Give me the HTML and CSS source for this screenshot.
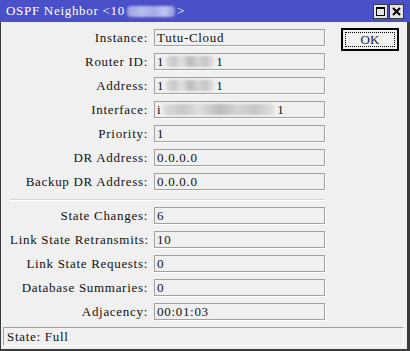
FILE: index.html
```html
<!DOCTYPE html>
<html lang="en">
<head>
    <meta charset="UTF-8">
    <title>OSPF Neighbor</title>
    <link rel="stylesheet" href="styles.css">
</head>
<body>

    <!-- Title bar -->
    <div class="titlebar">
        <div class="title">OSPF Neighbor &lt;10<span class="blur blur-title"></span>&gt;</div>
        <div class="win-buttons">
            <div class="win-btn">
                <svg width="9" height="9" viewBox="0 0 9 9"><rect x="0.5" y="0.5" width="8" height="8" fill="none" stroke="#000"/><rect x="0" y="0" width="9" height="2" fill="#000"/></svg>
            </div>
            <div class="win-btn">
                <svg width="9" height="9" viewBox="0 0 9 9"><path d="M1 1 L8 8 M8 1 L1 8" stroke="#000" stroke-width="2"/></svg>
            </div>
        </div>
    </div>

    <div class="frame">
        <div class="main">
            <div class="form">
                <div class="rows">
                    <div class="row"><label>Instance:</label><div class="field">Tutu-Cloud</div></div>
                    <div class="row"><label>Router ID:</label><div class="field">1<span class="blur blur-md"></span>1</div></div>
                    <div class="row"><label>Address:</label><div class="field">1<span class="blur blur-md"></span>1</div></div>
                    <div class="row"><label>Interface:</label><div class="field">i<span class="blur blur-lg"></span>1</div></div>
                    <div class="row"><label>Priority:</label><div class="field">1</div></div>
                    <div class="row"><label>DR Address:</label><div class="field">0.0.0.0</div></div>
                    <div class="row"><label>Backup DR Address:</label><div class="field">0.0.0.0</div></div>
                </div>

                <div class="separator"></div>

                <div class="rows">
                    <div class="row"><label>State Changes:</label><div class="field">6</div></div>
                    <div class="row"><label>Link State Retransmits:</label><div class="field">10</div></div>
                    <div class="row"><label>Link State Requests:</label><div class="field">0</div></div>
                    <div class="row"><label>Database Summaries:</label><div class="field">0</div></div>
                    <div class="row"><label>Adjacency:</label><div class="field">00:01:03</div></div>
                </div>
            </div>

            <div class="side">
                <button class="ok-btn"><span>OK</span></button>
            </div>
        </div>

        <!-- Status bar -->
        <div class="status">State: Full</div>
    </div>

</body>
</html>
```

FILE: styles.css
```css
* {
    margin: 0;
    padding: 0;
    box-sizing: border-box;
}

body {
    width: 410px;
    height: 351px;
    overflow: hidden;
    font-family: 'Liberation Serif', serif;
    font-size: 13px;
    letter-spacing: 0.7px;
    color: #111;
    background-color: #f0f0f0;
}

.titlebar {
    height: 22px;
    display: flex;
    align-items: center;
    justify-content: space-between;
    padding: 0 6px;
    background-color: #4a50c8;
    color: #fff;
}

.title {
    display: flex;
    align-items: center;
}

.win-buttons {
    display: flex;
    gap: 1px;
}

.win-btn {
    width: 15px;
    height: 15px;
    display: flex;
    align-items: center;
    justify-content: center;
    background-color: #e4e4e4;
    border: 1px solid #3a3a3a;
}

.frame {
    height: 329px;
    display: flex;
    flex-direction: column;
    border-left: 1px solid #3a3a3a;
    border-right: 3px solid #3a3a3a;
    border-bottom: 2px solid #3a3a3a;
}

.main {
    display: flex;
    padding: 7px 0 0 9px;
}

.form {
    width: 315px;
}

.rows {
    display: flex;
    flex-direction: column;
    gap: 7px;
}

.row {
    display: grid;
    grid-template-columns: 138px 171px;
    column-gap: 6px;
    align-items: center;
}

.row label {
    text-align: right;
    white-space: nowrap;
}

.field {
    height: 17px;
    display: flex;
    align-items: center;
    padding-left: 2px;
    border: 1px solid #a0a0a0;
    box-shadow: 1px 1px 0 #fff;
    white-space: nowrap;
}

.separator {
    margin: 9px 0 6px;
    border-top: 1px solid #d6d6d6;
    border-bottom: 1px solid #fff;
}

.blur {
    display: inline-block;
    height: 11px;
    margin: 0 2px;
    border-radius: 4px;
    background: linear-gradient(90deg, #dcdcdc, #c8c8c8 18%, #e0e0e0 32%, #bdbdbd 50%, #d4d4d4 68%, #c6c6c6 82%, #e2e2e2);
    filter: blur(1px);
}

.blur-title {
    width: 48px;
    background: linear-gradient(90deg, #9aa0e0, #b9bdf0 30%, #a6abe8 55%, #c2c5f2 80%, #8e94dc);
}

.blur-md {
    width: 48px;
}

.blur-lg {
    width: 112px;
}

.side {
    padding-left: 16px;
}

.ok-btn {
    width: 58px;
    height: 23px;
    margin-top: -1px;
    padding: 3px;
    font-family: inherit;
    font-size: 13px;
    letter-spacing: 0.2px;
    color: #1a1a40;
    background-color: #f0f0f0;
    border: 1px solid #000;
    box-shadow: inset 0 0 0 1px #000;
}

.ok-btn span {
    display: flex;
    align-items: center;
    justify-content: center;
    height: 100%;
    border: 1px dotted #000;
}

.status {
    height: 19px;
    margin: 7px 3px 0 2px;
    padding-left: 3px;
    display: flex;
    align-items: center;
    border: 1px solid;
    border-color: #a0a0a0 #fff #fff #a0a0a0;
}
```
